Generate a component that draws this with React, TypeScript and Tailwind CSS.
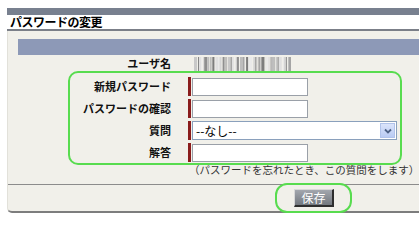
import React from 'react';

const stripes = [3, 1, 2, 1, 1, 3, 2, 1, 1, 2, 3, 1, 2, 2, 1, 1, 3, 1, 2, 1, 1, 2, 3, 1, 1, 2, 1, 3, 2, 1, 1, 2, 1, 3, 1, 2, 1, 1, 2, 1, 2, 1, 3, 1, 2, 1, 1, 2];
const shades = ['#c9c9c9', '#8f8f8f', '#e0e0e0', '#a5a5a5', '#d5d5d5', '#7d7d7d', '#bdbdbd', '#eaeaea'];

const MaskedName: React.FC = () => {
  let x = 0;
  const rects = stripes.map((w, i) => {
    const r = <rect key={i} x={x} y={0} width={w} height={14} fill={shades[(i * 5) % shades.length]} />;
    x += w + (i % 3 === 0 ? 1 : 0);
    return r;
  });
  return (
    <svg width="97" height="14" viewBox={`0 0 ${x} 14`} preserveAspectRatio="none">
      {rects}
    </svg>
  );
};

const Row: React.FC<{ label: string; children: React.ReactNode }> = ({ label, children }) => (
  <div className="flex items-center h-[19px]">
    <div className="w-[163px] text-right font-bold text-[11px] leading-[19px] text-[#111]">{label}</div>
    <div className="ml-[17px] w-[3px] h-[19px] bg-[#8a1c1c]" />
    <div className="ml-[1px] flex items-center">{children}</div>
  </div>
);

const TextBox: React.FC = () => (
  <div className="w-[116px] h-[18px] bg-white border border-[#9aa0a8]" />
);

export default function App() {
  return (
    <div
      className="relative w-[419px] h-[227px] bg-white overflow-hidden text-black"
      style={{ fontFamily: '"Noto Sans CJK JP", "Noto Sans", sans-serif' }}
    >
      <div className="ml-[7px] pt-[8px]">
        <div className="h-[7px] bg-[#78808f]" />
        <div className="h-[14px] pl-[3px] text-[12px] font-bold leading-[14px] tracking-[-0.5px]">パスワードの変更</div>
        <div className="h-[2px] bg-[#7b7f88]" />
        <div className="h-[182px] bg-[#f1f0ea] border-l border-[#e2e1da] border-b-2 border-b-[#7d7d7d] rounded-bl-[5px]">
          <div className="pt-[8px] pl-[10px]">
            <div className="h-[16px] bg-[#8d99b7]" />
          </div>

          <div className="flex items-center h-[15px] mt-[1px]">
            <div className="w-[163px] text-right font-bold text-[11px] leading-[15px] text-[#111]">ユーザ名</div>
            <div className="ml-[23px]">
              <MaskedName />
            </div>
          </div>

          <div className="mt-[6px] flex flex-col gap-[3px]">
            <Row label="新規パスワード">
              <TextBox />
            </Row>
            <Row label="パスワードの確認">
              <TextBox />
            </Row>
            <Row label="質問">
              <div className="w-[205px] h-[19px] bg-white border border-[#8aa0bc] flex items-center justify-between">
                <span className="pl-[3px] text-[12px] leading-[17px]">--なし--</span>
                <div className="mr-[1px] w-[15px] h-[15px] bg-gradient-to-b from-[#dbe4fb] to-[#b9cbf3] border border-[#b1c3ea] flex items-center justify-center">
                  <svg width="8" height="6" viewBox="0 0 8 6">
                    <path d="M1 1.5 L4 4.5 L7 1.5" stroke="#4d6185" strokeWidth="1.8" fill="none" />
                  </svg>
                </div>
              </div>
            </Row>
            <Row label="解答">
              <TextBox />
            </Row>
          </div>

          <div className="mt-[1px] ml-[181px] h-[14px] text-[10.5px] leading-[14px] text-[#333] whitespace-nowrap">（パスワードを忘れたとき、この質問をします）</div>

          <div className="mt-[7px] h-px bg-[#8c8c8c]" />

          <div className="mt-[4px] ml-[286px] w-[40px] h-[18px] bg-gradient-to-b from-[#a3a7ae] to-[#73787f] border-t border-l border-[#d8d8d8] border-r-2 border-b-2 border-r-[#2e2e2e] border-b-[#2e2e2e] flex items-center justify-center text-white text-[12px] leading-none">
            保存
          </div>
        </div>
      </div>

      <div className="absolute left-[68px] top-[71px] w-[334px] h-[94px] border-2 border-[#58dc4f] rounded-[10px]" />
      <div className="absolute left-[275px] top-[183px] w-[77px] h-[30px] border-2 border-[#58dc4f] rounded-[12px]" />
    </div>
  );
}
